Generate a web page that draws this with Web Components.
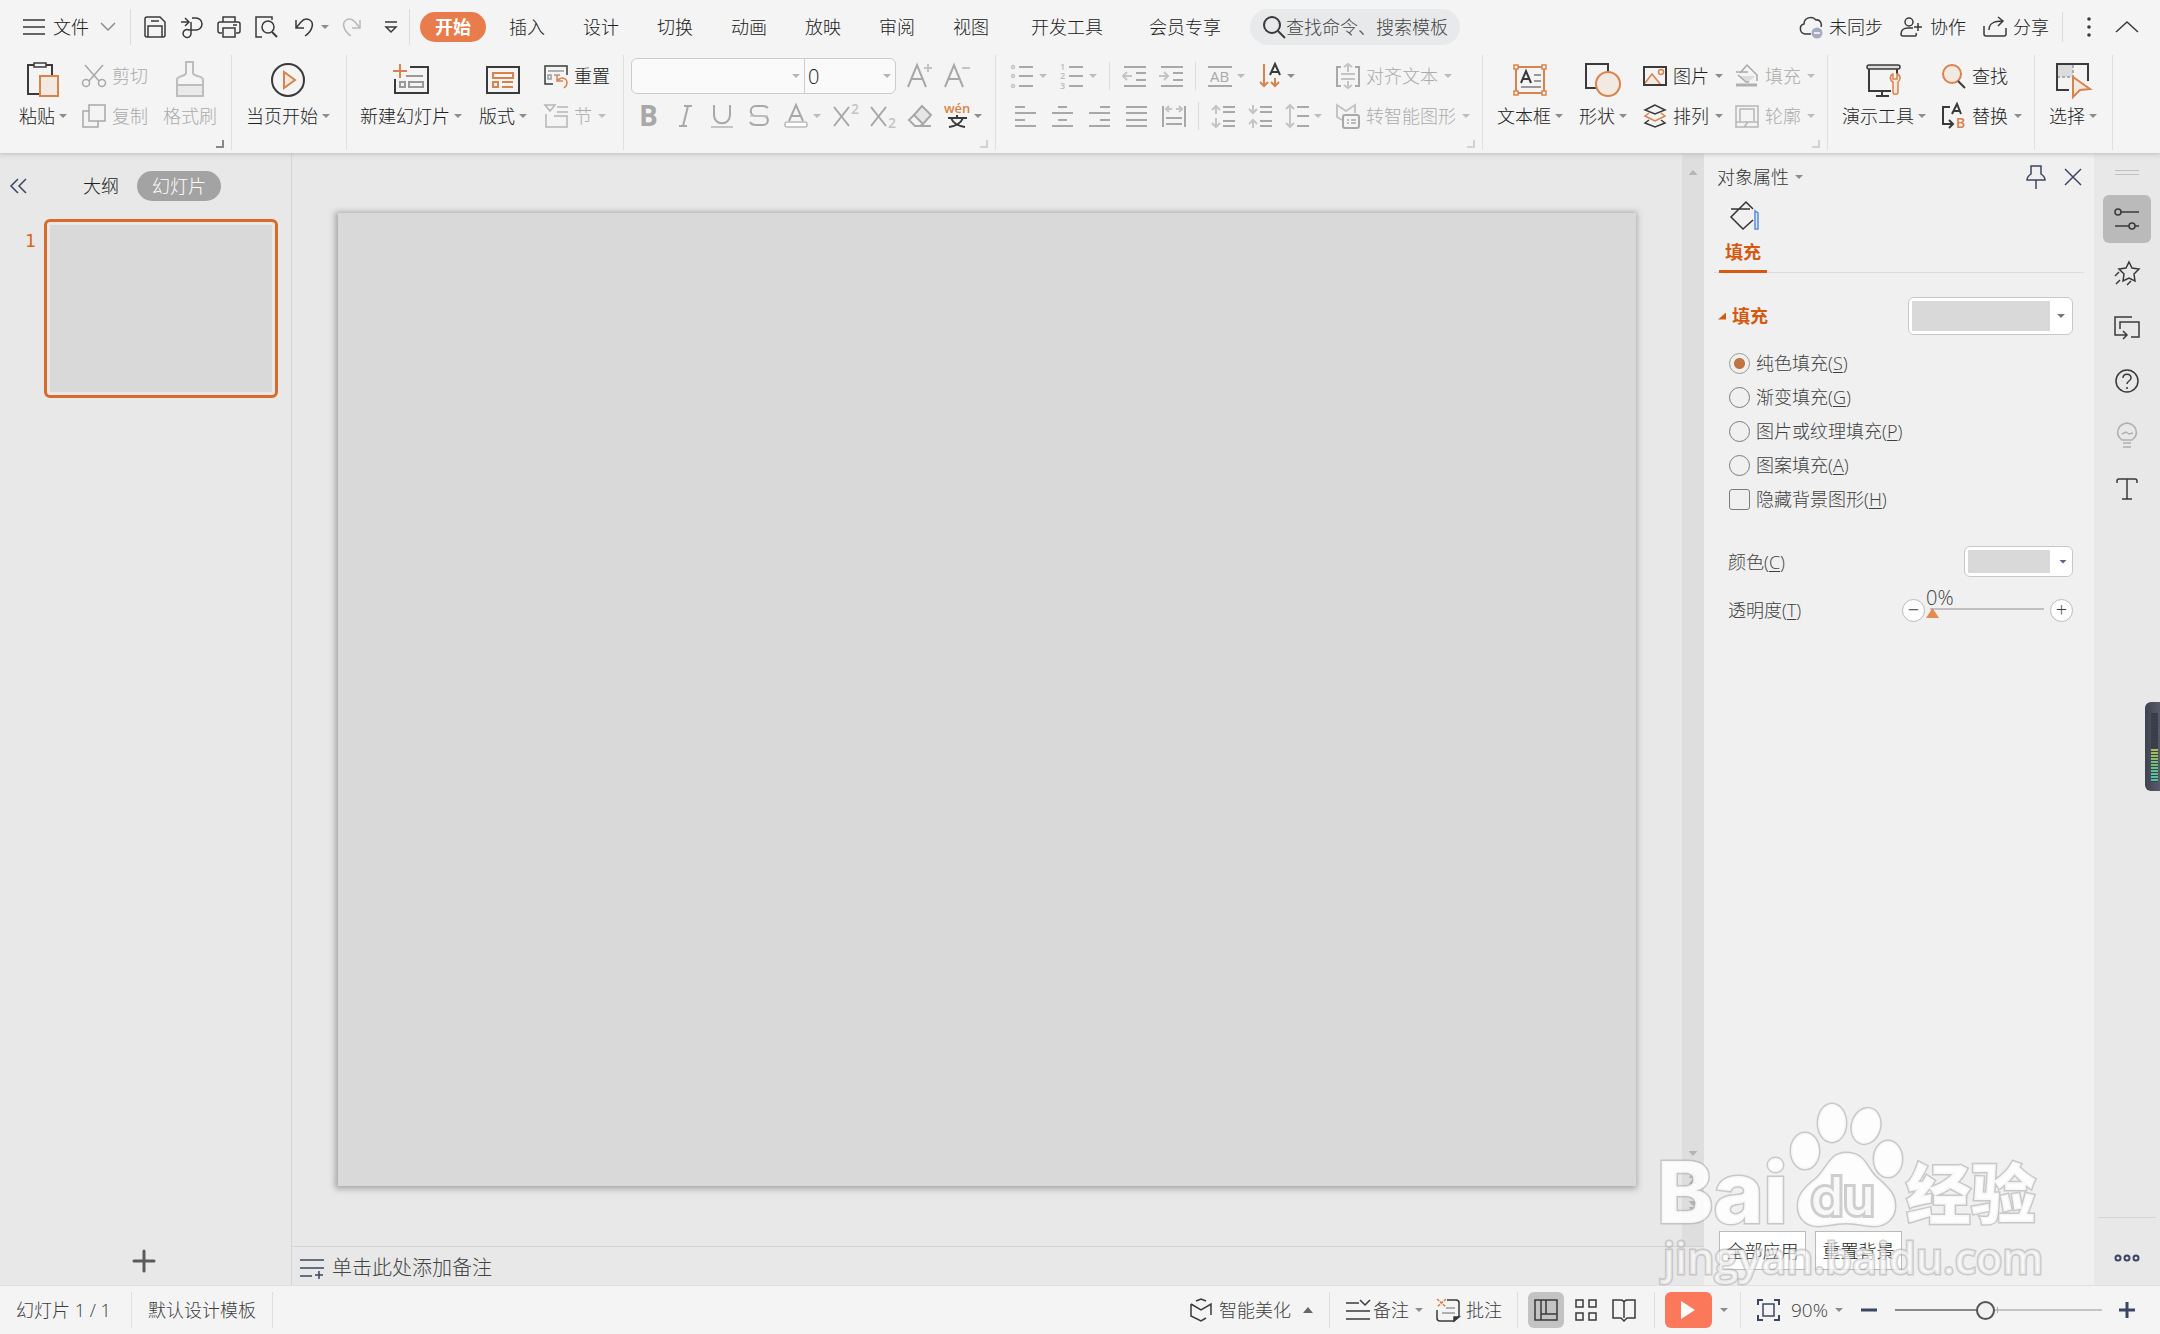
<!DOCTYPE html>
<html lang="zh-CN">
<head>
<meta charset="utf-8">
<title>演示</title>
<style>
html,body{margin:0;height:100%}
body{font:300 18px/24px "Open Sans","Noto Sans CJK SC",sans-serif;color:#202020;background:#e8e8e8;overflow:hidden}
</style>
</head>
<body>
<slide-app></slide-app>
<script>
const RESET = `*{box-sizing:border-box}button,input,select{font:inherit;color:inherit;margin:0;padding:0;border:0;background:none}button{display:flex;align-items:center;flex:none;white-space:nowrap}a{color:inherit;text-decoration:none}`;
const def = (name, html, css) => customElements.define(name, class extends HTMLElement {
  constructor() {
    super();
    this.attachShadow({mode: 'open'}).innerHTML = `<style>${RESET}${css}</style>${typeof html === 'function' ? html(this) : html}`;
  }
});

/* name: [width, height, markup] */
const D = '#3a3a3a', G = '#a8a8a8', L = '#c4c4c4', O = '#d9824a', N = '#3b4663', P = '#f3e9e3';
const T = (x, y, s, c, t, w = 400, f = 'Open Sans') => `<text x="${x}" y="${y}" font-size="${s}" fill="${c}" stroke="none" font-weight="${w}" font-family="'${f}','Noto Sans CJK SC',sans-serif">${t}</text>`;
const lines = (...a) => `<path d="${a.map(([x1, x2, y]) => `M${x1} ${y}H${x2}`).join('')}"/>`;
const ICONS = {
  menu: [22, 18, `<g stroke="#666" stroke-width="2">${lines([0,22,2],[0,22,9],[0,22,16])}</g>`],
  chev: [16, 10, `<path stroke="#8c8c8c" d="M1 1l7 7 7-7"/>`],
  chevup: [24, 14, `<path d="M1 12L12 2l11 10"/>`],
  save: [24, 24, `<path d="M2 4q0-2 2-2h13l5 5v13q0 2-2 2H4q-2 0-2-2zM5 22V11h14v11M8 6h8"/>`],
  exp: [24, 24, `<path d="M1 7h8M5 3l4 4-4 4M12 3h4a6 6 0 0 1 0 12H9a4 4 0 1 0 2 4V7"/>`],
  print: [24, 24, `<path d="M6 7V2h12v5M5 18H3q-2 0-2-2V9q0-2 2-2h18q2 0 2 2v7q0 2-2 2h-2M6 13h12v9H6zM16 10h4"/>`],
  prev: [24, 24, `<path d="M8 22H2V2h16v3"/><circle cx="14" cy="12" r="6"/><path stroke-width="2" d="M18 17l5 5"/>`],
  undo: [20, 20, `<path d="M2 3v8h8M2 11l5-6c5-6 13-2 11 5-1 4-4 7-7 9"/>`],
  redo: [20, 20, `<path stroke="#b9b9b9" d="M18 3v8h-8M18 11l-5-6C8-1 0 3 2 10c1 4 4 7 7 9"/>`],
  qat: [14, 14, `<path d="M1 2h12M2 7l5 5 5-5z"/>`],
  mag: [24, 24, `<g stroke-width="2"><circle cx="10" cy="10" r="8"/><path d="M16 16l7 7"/></g>`],
  cloud: [24, 24, `<path d="M12 19H6C0 18 0 10 5 9c0-6 8-9 12-4 5-1 6 5 5 7"/><circle cx="18" cy="18" r="5.500" fill="#a4acbf" stroke="none"/><path stroke="#fff" d="M15 18h6"/>`],
  user: [24, 22, `<circle cx="9" cy="6" r="4"/><path d="M13 12H8c-5 0-7 3-7 6q0 2 2 2h12q2 0 1-3M14 11h8M18 7v8"/>`],
  share: [24, 22, `<path d="M1 10v8q0 2 2 2h18q2 0 2-2v-6M6 14c0-7 5-9 14-9M15 1l5 4-5 5"/>`],
  dots: [6, 20, `<g fill="${D}" stroke="none"><circle cx="3" cy="2" r="1.800"/><circle cx="3" cy="10" r="1.800"/><circle cx="3" cy="18" r="1.800"/></g>`],
  paste: [36, 36, `<path stroke-width="2" d="M9 4H3v29h11M21 4h6v11"/><path d="M9 2h12v4H9z"/><path fill="${P}" stroke="${O}" stroke-width="2" d="M15 15h18v20H15z"/>`],
  cut: [24, 24, `<g stroke="${G}"><path d="M3 1l14 16M21 1L7 17"/><circle cx="4" cy="19" r="3.500"/><circle cx="20" cy="19" r="3.500"/></g>`],
  copy: [24, 24, `<g stroke="${G}"><path d="M7 7H1v16h15v-6"/><path d="M7 1h16v16H7z"/></g>`],
  brush: [30, 36, `<g stroke="#bdbdbd" stroke-width="2"><path fill="#eaeaea" stroke="none" d="M2 24h26v11H2z"/><path d="M11 1h7v11c0 4 10 2 10 7v16H2V19c0-5 9-3 9-7zM2 24h26"/></g>`],
  play: [34, 36, `<g stroke-width="2"><circle cx="17" cy="19" r="16"/><path stroke="${O}" fill="${P}" d="M13 11v16l11-8z"/></g>`],
  newslide: [36, 36, `<g stroke-width="2"><path d="M17 6h18v26H2V18"/><path stroke="${O}" d="M0 10h14M7 3v14"/><path stroke="#999" d="M13 15h17M7 21h5v5H7zM16 21h14v5H16z"/></g>`],
  layout: [34, 36, `<g stroke-width="2"><path d="M1 6h32v26H1z"/><path stroke="${O}" d="M7 12h20v5H7zM7 21h5v5H7zM16 21h11M16 26h11"/></g>`],
  reset: [24, 24, `<path d="M9 20H1V2h22v9"/><path stroke="#999" d="M4 7h16M4 11h3v4H4zM10 11h6"/><path stroke="${O}" d="M13 11v6h6M13 17c4-5 10-3 10 2 0 3-2 4-3 5"/>`],
  section: [24, 24, `<g stroke="#b5b5b5"><path d="M1 1h10l-5 6zM13 3h11M13 8h11M2 10v13h21V12H10"/></g>`],
  Aup: [26, 24, `<path stroke="${G}" stroke-width="2" d="M0 23L9 1l9 22M4 15h10"/><path stroke="${L}" d="M16 4h8M20 0v8" stroke-width="2"/>`],
  Adn: [26, 24, `<path stroke="${G}" stroke-width="2" d="M0 23L9 1l9 22M4 15h10"/><path stroke="${L}" d="M17 4h8" stroke-width="2"/>`],
  bold: [24, 24, T(3,22,28,G,'B',700)],
  ital: [24, 24, `<path stroke="${G}" stroke-width="2" d="M11 2h8M6 22h8M15 2l-5 20"/>`],
  under: [24, 24, `<path stroke="${G}" stroke-width="2" d="M4 1v10c0 11 16 11 16 0V1"/><path stroke="${L}" stroke-width="2" d="M1 23h22"/>`],
  strike: [24, 24, `<path stroke="${G}" stroke-width="2" d="M21 4c-1-1-3-2-5-2H9c-7 0-7 10 0 10h7c7 0 6 9 0 9H9c-3 0-5-1-6-3"/><path stroke="${L}" d="M3 12h18"/>`],
  fcol: [24, 24, `<path stroke="${G}" stroke-width="2" d="M5 17L12 1l7 16M8 12h9"/><rect x="1" y="18" width="22" height="5" rx="2" stroke="#bbb" fill="#fff"/>`],
  sup: [26, 24, `<path stroke="${G}" stroke-width="2" d="M1 3l15 19M16 3L1 22"/>${T(18,10,14,L,'2',600)}`],
  sub: [26, 24, `<path stroke="${G}" stroke-width="2" d="M1 3l15 19M16 3L1 22"/>${T(18,24,14,L,'2',600)}`],
  erase: [24, 24, `<g stroke="${G}" stroke-width="2"><path fill="#e6e6e6" d="M14 2l9 9-8 9-9-9z"/><path d="M6 11l-5 5 6 6h16M7 22h5l3-2"/></g>`],
  wen: [24, 28, `${T(-1,11,13,O,'wén',600)}<path stroke-width="2" d="M3 16h19M12 13v3M6 16c2 5 7 8 14 9M18 16c-2 5-7 8-14 9"/>`],
  bul: [24, 24, `<g stroke="${G}" stroke-width="2">${lines([9,23,3],[9,23,12],[9,23,22])}</g><g stroke="${L}"><circle cx="3" cy="3" r="1.500"/><circle cx="3" cy="12" r="1.500"/><circle cx="3" cy="22" r="1.500"/></g>`],
  num: [24, 24, `<g stroke="${G}" stroke-width="2">${lines([9,23,3],[9,23,12],[9,23,22])}</g>${T(0,6,9,'#bbb','1',600)}${T(0,15,9,'#bbb','2',600)}${T(0,25,9,'#bbb','3',600)}`],
  ind1: [24, 24, `<g stroke="${G}" stroke-width="2">${lines([2,24,3],[14,24,9],[14,24,16],[2,24,22])}</g><path stroke="${L}" stroke-width="2" d="M10 12H1M5 8l-4 4 4 4"/>`],
  ind2: [24, 24, `<g stroke="${G}" stroke-width="2">${lines([2,24,3],[14,24,9],[14,24,16],[2,24,22])}</g><path stroke="${L}" stroke-width="2" d="M0 12h9M5 8l4 4-4 4"/>`],
  AB: [24, 24, `<g stroke="${G}" stroke-width="2">${lines([0,24,3],[0,24,22])}</g>${T(2,18,15,G,'AB',400)}`],
  sort: [24, 26, `<path stroke="${O}" stroke-width="2" d="M6 1v22M2 19l4 4 4-4M17 15v8M13 19l4 4 4-4"/><path stroke-width="2" d="M12 12l5-11 5 11M14 9h6"/>`],
  valign: [24, 26, `<path stroke="${G}" stroke-width="2" d="M5 4H1v19h4M19 4h4v19h-4"/><path stroke="${L}" stroke-width="2" d="M5 11h14M5 16h14M12 9V1M8 4l4-3 4 3M12 18v7M8 22l4 3 4-3"/>`],
  al: [24, 24, `<g stroke="${G}" stroke-width="2">${lines([1,11,3],[1,22,9],[1,11,16],[1,22,22])}</g>`],
  ac: [24, 24, `<g stroke="${G}" stroke-width="2">${lines([7,16,3],[1,22,9],[7,16,16],[1,22,22])}</g>`],
  ar: [24, 24, `<g stroke="${G}" stroke-width="2">${lines([12,22,3],[1,22,9],[12,22,16],[1,22,22])}</g>`],
  aj: [24, 24, `<g stroke="${G}" stroke-width="2">${lines([1,22,3],[1,22,9],[1,22,16],[1,22,22])}</g>`],
  dist: [24, 24, `<g stroke="${G}" stroke-width="2"><path d="M1 2v21M23 2v21M4 14h16M4 20h16"/></g><path stroke="${L}" stroke-width="2" d="M10 5H4M7 2L4 5l3 3M14 5h6M17 2l3 3-3 3"/>`],
  lsp: [24, 24, `<g stroke="${G}" stroke-width="2">${lines([12,24,3],[12,24,8],[12,24,17],[12,24,22])}</g><path stroke="${L}" stroke-width="2" d="M5 10V2M1 6l4-4 4 4M5 14v9M1 19l4 4 4-4"/>`],
  lsp2: [24, 24, `<g stroke="${G}" stroke-width="2">${lines([12,24,3],[12,24,8],[12,24,17],[12,24,22])}</g><path stroke="${L}" stroke-width="2" d="M5 1v8M1 5l4 4 4-4M5 24v-8M1 20l4-4 4 4"/>`],
  lsp3: [24, 24, `<g stroke="${G}" stroke-width="2">${lines([12,24,3],[12,24,12],[12,24,22])}</g><path stroke="${L}" stroke-width="2" d="M5 2v21M1 5l4-4 4 4M1 19l4 4 4-4"/>`],
  smart: [24, 26, `<path stroke="${L}" stroke-width="2" d="M6 17l-5-3V2l9 6 9-6v8"/><rect x="7" y="12" width="16" height="13" rx="2" stroke="${G}" stroke-width="2"/><path stroke="${G}" d="M11 17h2M15 17h5M11 20h2M15 20h5"/>`],
  tbox: [36, 36, `<path stroke="${O}" stroke-width="2" d="M4 6h28v26H4z"/><g stroke="${O}" fill="#fff"><path d="M2 4h4v4H2zM30 4h4v4h-4zM2 30h4v4H2zM30 30h4v4h-4z"/></g><path stroke-width="2" d="M9 22l5-12 5 12M11 18h6"/><path stroke="#999" stroke-width="2" d="M22 14h7M22 20h7M9 26h20"/>`],
  shape: [36, 36, `<path stroke-width="2" d="M12 27H1V3h22v9"/><circle cx="23" cy="23" r="12" fill="${P}" stroke="${O}" stroke-width="2"/>`],
  pic: [24, 22, `<path fill="${P}" stroke="${O}" d="M2 18l7-9 9 11"/><circle cx="18" cy="7" r="2.500" stroke="${O}"/><path stroke-width="2" d="M1 2h22v18H1z"/>`],
  arr: [24, 24, `<path stroke="${O}" d="M6 9l-4 3 10 5 10-5-4-3"/><path d="M12 1L2 6l10 4 10-4zM6 16l-4 3 10 4 10-4-4-3"/>`],
  fill: [24, 24, `<path fill="#ddd" stroke="none" d="M3 12h18l-8 6z"/><path stroke="${G}" d="M1 8h12M5 9l7-8 10 10v6M3 11l8 7h3"/><path stroke="#b0b0b0" stroke-width="3" d="M1 21h21"/>`],
  outline: [24, 24, `<path stroke="#b5b5b5" d="M1 18V2h22v16M5 17V5h14v12M1 18h22v5H1zM9 23l4-5"/>`],
  tools: [36, 36, `<path stroke-width="2" d="M3 8v22h22M31 8v5M16 30v5M10 35h13"/><rect x="1" y="4" width="33" height="4" rx="2" fill="#ddd"/><path fill="${P}" stroke="${O}" d="M27 21c-4-2-3-7 0-8v5h4v-5c4 1 4 6 1 8v10c0 3-5 3-5 0z"/>`],
  find: [26, 26, `<circle cx="11" cy="11" r="9" fill="${P}" stroke="${O}" stroke-width="2"/><path stroke-width="2" d="M17 18l7 7"/>`],
  repl: [26, 26, `<path stroke-width="2" d="M9 4H2v17h10M8 17l4 4-4 4M11 11l5-10 4 10M13 8h6"/>${T(15,25,14,O,'B',600)}`],
  sel: [36, 36, `<path fill="#dcdcdc" stroke="none" d="M3 4h15v12H3z"/><path stroke="#999" stroke-dasharray="3 2" d="M18 4v12H3"/><path stroke-width="2" d="M14 29H2V3h31v17"/><path fill="${P}" stroke="${O}" stroke-width="2" d="M18 16l17 12-10 1-7 7z"/>`],
  coll: [18, 16, `<g stroke="${N}"><path d="M8 1L1 8l7 7M16 1L9 8l7 7"/></g>`],
  plus: [24, 24, `<path stroke="#5a5a5a" stroke-width="3" stroke-linecap="round" d="M2 12h20M12 2v20"/>`],
  note: [24, 20, `<g stroke="${N}">${lines([0,24,2],[0,24,10],[0,12,18],[15,23,17])}<path d="M19 13v8"/></g>`],
  pin: [22, 24, `<path stroke="${N}" d="M6 1h10v8c3 2 4 4 4 6H2c0-2 1-4 4-6zM11 15v9"/>`],
  x: [18, 18, `<path stroke="${N}" d="M1 1l16 16M17 1L1 17"/>`],
  bucket: [30, 30, `<path stroke="#333" d="M23 8l-7-7L1 16l12 12 10-9M1 8h19"/><path stroke="#5b8bd8" fill="#dce8fb" d="M25 28V10l3 2v16z"/>`],
  rail1: [26, 24, `<circle cx="4" cy="5" r="3"/><path d="M7 5h18M1 19h14M21 19h4"/><circle cx="18" cy="19" r="3"/>`],
  rail2: [26, 26, `<path d="M15 2l3 6 7 1-5 5 1 7-6-3-6 3 1-7-5-5 7-1zM1 16l4-4M2 24l4-4M13 25l4-4"/>`],
  rail3: [26, 24, `<path d="M18 2H1v18h11M6 14V7h19v15h-8M9 16l4 4-4 4"/>`],
  rail4: [24, 24, `<circle cx="12" cy="12" r="11"/><path d="M8 9c0-5 8-5 8 0 0 3-4 3-4 6M12 18v2"/>`],
  rail5: [22, 26, `<g stroke="#b0b0b0"><path d="M6 18c-8-6-4-16 5-17 9 1 13 11 5 17zM6 12l4-2 3 2 4-1M7 21h8M7 25h8"/></g>`],
  rail6: [22, 24, `<path d="M1 6V4q0-2 2-2h16q2 0 2 2v2M11 2v20M6 22h10"/>`],
  more: [26, 8, `<g stroke="${N}" stroke-width="2"><circle cx="4" cy="4" r="2.500"/><circle cx="13" cy="4" r="2.500"/><circle cx="22" cy="4" r="2.500"/></g>`],
  cube: [22, 24, `<path d="M6 3l5-2 5 2M1 6v12l10 5 5-3M1 6l10 6 10-6v11"/>`],
  nts: [24, 22, `${lines([0,13,4],[0,24,12],[0,24,20])}<path d="M14 1l5 5 5-5"/>`],
  cmt: [24, 24, `<path d="M11 2h9q3 0 3 3v13l-5 5H4q-3 0-3-3v-8"/><path stroke="#999" d="M10 10h9M6 15h13"/><path fill="${D}" d="M18 23v-4h5z"/><path stroke="${O}" stroke-dasharray="3 1" d="M1 1l9 8M10 1L1 9"/>`],
  v1: [24, 24, `<path d="M1 2h22v20H1zM7 2v20M7 16h16M12 2v14"/>`],
  v2: [24, 24, `<path d="M2 2h7v7H2zM15 2h7v7h-7zM2 15h7v7H2zM15 15h7v7h-7z"/>`],
  v3: [24, 24, `<path d="M12 4q-1-2-3-2H1v18h8l3 3 3-3h8V2h-8q-2 0-3 2v16"/>`],
  go: [14, 20, `<path fill="#fff" stroke="none" d="M0 1l14 9-14 9z"/>`],
  fit: [24, 22, `<path stroke="${N}" stroke-width="2" d="M1 6V1h5M17 1h5v5M22 16v5h-5M6 21H1v-5"/><path stroke="${N}" d="M6 5h11v12H6z"/>`],
  minus: [16, 16, `<path stroke="${N}" stroke-width="3" d="M0 8h16"/>`],
  zplus: [16, 16, `<path stroke="${N}" stroke-width="3" d="M0 8h16M8 0v16"/>`],
  launch: [8, 8, `<path style="stroke:var(--lc)" stroke-width="2" d="M7 0v7H0"/>`]
};

def('app-icon', el => {
  const [w, h, m] = ICONS[el.getAttribute('name')];
  return `<svg width="${w}" height="${h}" viewBox="0 0 ${w} ${h}" fill="none" stroke="${D}" stroke-width="1.500" aria-hidden="true">${m}</svg>`;
}, `:host{display:flex;align-items:center;justify-content:center;flex:none}svg{display:block;overflow:visible}`);

const CARET = `.caret{width:8px;height:4px;flex:none;background:#8c8c8c;clip-path:polygon(0 0,100% 0,50% 100%)}`;

/* small: icon beside label; big: icon over label; only: icon without a label */
def('tool-button', el => {
  const c = el.hasAttribute('caret') ? '<i class="caret"></i>' : '';
  const ic = `<app-icon name="${el.getAttribute('icon')}"></app-icon>`;
  return el.hasAttribute('big')
    ? `<button>${ic}<span class="l"><slot></slot>${c}</span></button>`
    : `<button ${el.title ? `aria-label="${el.title}"` : ''}>${ic}${el.hasAttribute('only') ? '' : '<slot></slot>'}${c}</button>`;
}, `:host{display:block;flex:none}button{height:36px;gap:6px}app-icon{width:24px}
:host([only]) button{gap:5px}
:host([off]) button{color:#ababab}:host([off]) .caret{background:#bcbcbc}
:host([big]) button{flex-direction:column;height:76px;padding-top:3px;gap:7px}
:host([big]) app-icon{height:36px;width:36px}.l{display:flex;align-items:center;gap:4px}${CARET}`);

def('ribbon-group', el => `<slot></slot>${el.hasAttribute('launch') ? '<button aria-label="更多设置"><app-icon name="launch"></app-icon></button>' : ''}`,
`:host{display:flex;position:relative;flex:none;height:95px;margin-top:1px;border-right:1px solid #dfdfdf;padding-top:3px;gap:16px}
button{position:absolute;right:7px;bottom:2px;--lc:#888}:host([launch=off]) button{--lc:#d2d2d2}`);

def('font-box', `<input aria-label="字体" class="f"><i class="caret"></i><hr><input aria-label="字号" value="0" class="s"><i class="caret"></i>`,
`:host{display:flex;align-items:center;width:265px;height:36px;border:1px solid #ccc;border-radius:6px;background:#fafafa;padding-right:4px}
hr{width:1px;height:34px;border:0;margin:0 0 0 4px;background:#ccc}.f{width:160px;height:30px}.s{flex:1;min-width:0;height:30px;padding-left:3px;font-size:20px}${CARET}.caret{background:#b5b5b5}`);

def('top-bar', `
<button class="file"><app-icon name="menu"></app-icon>文件<app-icon name="chev"></app-icon></button><hr>
<nav class="qat"><button aria-label="保存"><app-icon name="save"></app-icon></button><button aria-label="输出"><app-icon name="exp"></app-icon></button><button aria-label="打印"><app-icon name="print"></app-icon></button><button aria-label="打印预览"><app-icon name="prev"></app-icon></button><button class="u" aria-label="撤销"><app-icon name="undo"></app-icon><i class="caret"></i></button><button aria-label="恢复"><app-icon name="redo"></app-icon></button><button class="q" aria-label="自定义"><app-icon name="qat"></app-icon></button></nav><hr>
<nav class="tabs">${['开始','插入','设计','切换','动画','放映','审阅','视图','开发工具','会员专享'].map((t, i) => `<a href="#" class="${t.length > 2 ? 'w' : ''} ${i ? '' : 'on'}"><span>${t}</span></a>`).join('')}</nav>
<label><app-icon name="mag"></app-icon><input placeholder="查找命令、搜索模板" aria-label="搜索"></label>
<div class="right"><button><app-icon name="cloud"></app-icon>未同步</button><button><app-icon name="user"></app-icon>协作</button><button><app-icon name="share"></app-icon>分享</button><hr><button class="d" aria-label="更多"><app-icon name="dots"></app-icon></button><button aria-label="收起功能区"><app-icon name="chevup"></app-icon></button></div>`,
`:host{display:flex;align-items:center;height:54px;padding:0 21px 0 23px}
hr{width:1px;height:36px;border:0;margin:0;background:#dcdcdc;flex:none}
.file{gap:8px;margin-right:14px}.file app-icon:last-child{margin-left:3px}
.qat{display:flex;align-items:center;gap:13px;padding:0 11px 0 12px}.u{gap:7px;margin-left:3px}.qat .q{margin:0 0 0 9px}
.tabs{display:flex;padding-left:6px}.tabs a{width:74px;display:flex;justify-content:center;align-items:center}.tabs .w{width:118px}
.on span{background:#e87c4c;color:#fff;font-weight:700;border-radius:15px;padding:3px 15px}
label{display:flex;align-items:center;background:#e7e9ea;border-radius:18px;height:36px;width:210px;padding-left:12px;margin-left:6px}
input{flex:1;min-width:0;height:30px}input::placeholder{color:#444;opacity:1}
.right{display:flex;align-items:center;margin-left:auto;gap:17px}.right button{gap:6px}.right hr{height:30px;margin-right:6px;margin-left:-4px}.right .d{margin:0 6px 0 0}${CARET}`);

const tb = (icon, label, o = '') => `<tool-button icon="${icon}" ${o}>${label}</tool-button>`;
const only = (icon, title, o = '') => `<tool-button only icon="${icon}" title="${title}" ${o}></tool-button>`;
def('ribbon-bar', `
<ribbon-group launch class="g1">${tb('paste','粘贴','big caret')}<div class="c">${tb('cut','剪切','off')}${tb('copy','复制','off')}</div>${tb('brush','格式刷','big off')}</ribbon-group>
<ribbon-group class="g2">${tb('play','当页开始','big caret')}</ribbon-group>
<ribbon-group class="g3">${tb('newslide','新建幻灯片','big caret')}${tb('layout','版式','big caret')}<div class="c">${tb('reset','重置')}${tb('section','节','off caret')}</div></ribbon-group>
<ribbon-group launch="off" class="g4"><div class="c"><div class="r"><font-box></font-box>${only('Aup','增大字号','off')}${only('Adn','减小字号','off')}</div>
<div class="r in">${only('bold','加粗','off')}${only('ital','倾斜','off')}${only('under','下划线','off')}${only('strike','删除线','off')}${only('fcol','字体颜色','off caret')}${only('sup','上标','off')}${only('sub','下标','off')}${only('erase','清除格式','off')}${only('wen','拼音','caret')}</div></div></ribbon-group>
<ribbon-group launch="off" class="g5"><div class="c"><div class="r">${only('bul','项目符号','off caret')}${only('num','编号','off caret')}<hr>${only('ind1','减少缩进','off')}${only('ind2','增加缩进','off')}<hr>${only('AB','文字效果','off caret')}${only('sort','文字方向','caret')}</div>
<div class="r in">${only('al','左对齐','off')}${only('ac','居中','off')}${only('ar','右对齐','off')}${only('aj','两端对齐','off')}${only('dist','分散对齐','off')}<hr>${only('lsp','增大段距','off')}${only('lsp2','减小段距','off')}${only('lsp3','行距','off caret')}</div></div>
<div class="c">${tb('valign','对齐文本','off caret')}${tb('smart','转智能图形','off caret')}</div></ribbon-group>
<ribbon-group launch="off" class="g6">${tb('tbox','文本框','big caret')}${tb('shape','形状','big caret')}<div class="cc"><div class="c">${tb('pic','图片','caret')}${tb('arr','排列','caret')}</div><div class="c">${tb('fill','填充','off caret')}${tb('outline','轮廓','off caret')}</div></div></ribbon-group>
<ribbon-group class="g7">${tb('tools','演示工具','big caret')}<div class="c">${tb('find','查找')}${tb('repl','替换','caret')}</div></ribbon-group>
<ribbon-group class="g8">${tb('sel','选择','big caret')}</ribbon-group>`,
`:host{display:flex;height:99px}
.c{display:flex;flex-direction:column;gap:4px;flex:none}.cc{display:flex;gap:12px}.r{display:flex;align-items:center;gap:13px}hr{width:1px;height:28px;border:0;background:#dcdcdc;margin:0 -1px}
.g1{padding-left:19px;padding-right:14px;gap:15px}.g2{padding-left:14px;padding-right:16px}.g3{padding-left:13px;padding-right:13px;gap:17px}
.g4{padding-left:7px;padding-right:13px}.g4 .in{padding-left:5px}.g5{padding-left:14px;padding-right:12px;gap:14px}.g5 .in{padding-left:4px}
.g6,.g7,.g8{padding-left:14px;padding-right:12px}.g8{padding-right:15px}`);

def('slide-panel', `<header><button aria-label="收起"><app-icon name="coll"></app-icon></button><button class="o">大纲</button><button class="on">幻灯片</button></header>
<ol><li><span>1</span><a href="#" aria-label="幻灯片 1"><i></i></a></li></ol><button class="add" aria-label="新建幻灯片"><app-icon name="plus"></app-icon></button>`,
`:host{display:flex;flex-direction:column;width:292px;border-right:1px solid #d4d4d4;padding:18px 13px 12px 10px}
header{display:flex;align-items:center;height:30px}.o{margin-left:55px}.on{margin-left:18px;height:30px;background:#a3a3a3;color:#fff;border-radius:15px;padding:0 15px}
ol{list-style:none;margin:18px 0 0;padding:0}li{display:flex;justify-content:flex-end;gap:8px}li span{color:#d8641a;font:400 17px/24px "DejaVu Sans",sans-serif;padding-top:10px}
a{width:234px;height:179px;border:3px solid #d76b2b;border-radius:6px;padding:3px;display:flex}i{flex:1;background:#d9d9d9}
.add{margin:auto auto 0 122px}`);

def('slide-stage', `<div class="row"><main><section aria-label="幻灯片"></section></main><div class="sb"><i class="up"></i><i class="gap"></i><i></i><span><i class="up"></i><i class="up"></i></span><span><i></i><i></i></span></div></div>
<footer><app-icon name="note"></app-icon>单击此处添加备注</footer>`,
`:host{display:flex;flex-direction:column;flex:1;min-width:0}
.row{display:flex;flex:1;min-height:0}main{flex:1;display:flex;align-items:center;justify-content:center;padding:0 46px}
section{width:100%;aspect-ratio:4/3;background:#d9d9d9;box-shadow:-1px 1px 6px 2px #a8a8a8}
.sb{width:22px;background:#dedede;display:flex;flex-direction:column;align-items:center;padding:17px 0 34px}
.sb i{width:9px;height:5px;background:#b4b4b4;clip-path:polygon(0 0,100% 0,50% 100%);flex:none}.sb .up{clip-path:polygon(0 100%,100% 100%,50% 0)}.sb .gap{flex:1;clip-path:none;background:none}
.sb span{display:flex;flex-direction:column;gap:1px;margin-top:17px}
footer{display:flex;align-items:center;gap:8px;height:39px;border-top:1px solid #d2d2d2;padding:3px 8px 0;font-size:20px;color:#444}`);

const opt = (t, k, type, on) => `<label><input type="${type}" name="fill" ${on ? 'checked' : ''}><span>${t}(<u>${k}</u>)</span></label>`;
def('property-panel', `<header><button class="t">对象属性<i class="caret"></i></button><button aria-label="固定"><app-icon name="pin"></app-icon></button><button aria-label="关闭"><app-icon name="x"></app-icon></button></header>
<nav><button><app-icon name="bucket"></app-icon><b>填充</b></button></nav>
<div class="sec"><b id="ft"><i class="tri"></i>填充</b><div class="box w"><select aria-labelledby="ft"><option></option></select><i class="caret"></i></div></div>
<fieldset>${opt('纯色填充','S','radio',1)}${opt('渐变填充','G','radio')}${opt('图片或纹理填充','P','radio')}${opt('图案填充','A','radio')}${opt('隐藏背景图形','H','checkbox')}</fieldset>
<div class="f"><label for="col">颜色(<u>C</u>)</label><div class="box"><select id="col"><option></option></select><i class="caret"></i></div></div>
<div class="f s"><label for="tr">透明度(<u>T</u>)</label><button class="rd" aria-label="减小">−</button><div class="sl"><output>0%</output><input id="tr" type="range" value="0"></div><button class="rd" aria-label="增大">+</button></div>
<footer><button>全部应用</button><button>重置背景</button></footer>`,
`:host{display:flex;flex-direction:column;width:390px;background:#f0f0f0;color:#404040;padding:11px 21px 15px 15px}
header{display:flex;align-items:center;height:26px;color:#333;margin:0 -9px 0 -2px}.t{gap:6px;margin-right:auto}header button+button{margin-left:17px}${CARET}
nav{display:flex;border-bottom:1px solid #dcdcdc;margin:10px -11px 0 -5px;padding-left:5px}nav button{flex-direction:column;padding:1px 6px 5px;gap:9px;height:73px;border-bottom:3px solid #d45a12;margin-bottom:-1px}
nav b,.sec b{color:#d45a12;font-weight:700}nav app-icon{height:30px;margin-left:3px}
.sec{display:flex;justify-content:space-between;align-items:center;margin-top:24px}.sec b{display:flex;align-items:center;gap:6px;margin-left:-1px}.tri{width:8px;height:7px;background:#d45a12;clip-path:polygon(100% 0,100% 100%,0 100%)}
.box{position:relative;width:109px;height:31px;display:flex;align-items:center}.box select{appearance:none;width:100%;height:100%;border:1px solid #c8c8c8;border-radius:6px;padding:3px;background:linear-gradient(#d9d9d9,#d9d9d9) 3px 3px/calc(100% - 25px) calc(100% - 6px) no-repeat #fff}
.box .caret{position:absolute;right:6px;background:#5c6488}.w{width:165px;height:38px}.w .caret{right:8px;background:#777}
fieldset{border:0;margin:11px 0 0 10px;padding:0}fieldset label{display:flex;align-items:center;gap:6px;height:34px}u{text-underline-offset:2px;text-decoration-thickness:1px}
input[type=radio],input[type=checkbox]{appearance:none;width:21px;height:21px;border:1px solid #7c7c7c;flex:none;border-radius:3px}input[type=radio]{border-radius:50%}input:checked{border-color:#999;background:radial-gradient(circle,#bf7442 5px,transparent 6px)}
.f{display:flex;align-items:center;margin:30px 0 0 9px}.f>label{margin-right:auto}.s{margin-top:17px}
.rd{width:23px;height:23px;border:1px solid #bbb;border-radius:50%;background:#fff;justify-content:center;font-size:20px;line-height:20px}
.sl{position:relative;width:118px;margin:0 6px 0 1px;height:32px;display:flex;align-items:flex-end}output{position:absolute;left:0;top:-8px;font-size:20px}
input[type=range]{appearance:none;width:100%;height:18px;display:block;background:linear-gradient(#c0bfc6,#c0bfc6) 4px 0/100% 2px no-repeat}
input[type=range]::-webkit-slider-thumb{appearance:none;width:13px;height:10px;background:#e58a52;clip-path:polygon(50% 0,100% 100%,0 100%);margin-top:-8px}
footer{display:flex;gap:9px;margin-top:auto}footer button{border:1px solid #bbb;background:#fff;width:87px;height:39px;justify-content:center;color:#222}`);

def('side-rail', `<i class="h"></i>${['属性','动画','切换','帮助','提示','文字'].map((t, i) => `<button aria-label="${t}" class="${i ? '' : 'on'}"><app-icon name="rail${i + 1}"></app-icon></button>`).join('')}<hr><button aria-label="更多" class="m"><app-icon name="more"></app-icon></button>`,
`:host{display:flex;flex-direction:column;align-items:center;width:66px;gap:6px;padding-top:17px;padding-bottom:3px}
.h{width:24px;height:5px;border:1px solid #c0c0c0;border-width:1px 0;margin-bottom:14px}button{width:48px;height:48px;justify-content:center;border-radius:6px}.on{background:#bababa}
hr{width:58px;height:1px;border:0;background:#d4d4d4;margin:auto 0 10px}`);

def('status-bar', `<span class="pg">幻灯片 1 / 1</span><hr><span>默认设计模板</span><hr>
<div><button class="a"><app-icon name="cube"></app-icon>智能美化<i class="caret up"></i></button><hr>
<button class="n"><app-icon name="nts"></app-icon>备注<i class="caret"></i></button><button class="cm"><app-icon name="cmt"></app-icon>批注</button><hr>
<button class="v on" aria-label="普通视图"><app-icon name="v1"></app-icon></button><button class="v" aria-label="浏览"><app-icon name="v2"></app-icon></button><button class="v" aria-label="阅读"><app-icon name="v3"></app-icon></button><hr class="h2">
<button class="go" aria-label="放映"><app-icon name="go"></app-icon></button><button class="k" aria-label="放映选项"><i class="caret"></i></button><hr>
<button class="ft" aria-label="适应窗口"><app-icon name="fit"></app-icon></button><button class="z">90%<i class="caret"></i></button><button aria-label="缩小"><app-icon name="minus"></app-icon></button><input type="range" value="43" aria-label="缩放"><button aria-label="放大"><app-icon name="zplus"></app-icon></button></div>`,
`:host{display:flex;align-items:center;height:49px;background:#f4f4f4;border-top:1px solid #e0e0e0;padding:0 25px 0 16px;color:#3c3c3c}
hr{width:1px;height:36px;border:0;margin:0 16px;background:#dedede;flex:none}div{display:flex;align-items:center;margin-left:auto}.pg{min-width:99px}
${CARET}.up{width:10px;height:6px;background:#666;clip-path:polygon(50% 0,100% 100%,0 100%);margin-left:5px}
.a{gap:7px}.n{gap:3px}.n .caret{margin-left:3px}.cm{gap:6px;margin-left:13px}.cm+hr{margin:0 10px 0 15px}
.v{width:36px;height:36px;justify-content:center;border-radius:6px}.on{background:#c3c3c3}.v+.v{margin-left:4px}.v+.v+.v{margin-left:2px}.h2{margin:0 10px 0 12px}
.go{width:47px;height:36px;border-radius:6px;background:#fb795a;justify-content:center}.k{margin-left:8px}.k+hr{margin-left:12px}.ft{margin-right:10px}.z{gap:7px;margin-right:18px;font-size:19px}
input{appearance:none;width:207px;height:24px;margin:0 17px 0 18px;background:linear-gradient(#888,#888) 0 11px/82px 2px no-repeat,linear-gradient(#aaa,#aaa) 102px 9px/1px 6px no-repeat,linear-gradient(#c4c4c4,#c4c4c4) 0 11px/100% 2px no-repeat}
input::-webkit-slider-thumb{appearance:none;width:19px;height:19px;border:2px solid #555;border-radius:50%;background:#f1f1f1}`);

def('water-mark', `<svg width="400" height="190" viewBox="0 0 400 190" role="img" aria-label="Baidu 经验">
<g fill="#fff" fill-opacity=".85" stroke="#a8a8a8" stroke-opacity=".55" stroke-width="3" paint-order="stroke">
<ellipse cx="155" cy="61" rx="14" ry="18"/><ellipse cx="182" cy="33" rx="14" ry="19"/><ellipse cx="216" cy="36" rx="14" ry="18" transform="rotate(15 216 36)"/><ellipse cx="238" cy="69" rx="14" ry="18"/>
<path d="M196 63c20 0 20 16 32 26 14 12 17 18 17 27 0 12-9 20-21 20-10 0-16-3-28-3s-18 3-28 3c-12 0-20-8-20-20 0-10 5-17 18-27 12-11 14-26 30-26z"/>
<text x="7" y="133" font-family="Inter,sans-serif" font-weight="800" font-size="85">Bai</text><text x="161" y="125" font-family="Inter,sans-serif" font-weight="500" font-size="52" stroke-width="6">du</text>
<text x="256" y="128" font-family="'Noto Sans CJK SC',sans-serif" font-weight="900" font-size="65">经验</text>
<text x="13" y="184" font-family="'Open Sans',sans-serif" font-weight="600" font-size="43" fill-opacity=".65">jingyan.baidu.com</text></g></svg>`,
`:host{position:absolute;right:110px;bottom:54px;pointer-events:none}svg{display:block;overflow:visible}`);

def('level-meter', `<i></i>`, `:host{position:absolute;right:0;top:702px;width:15px;height:89px;background:linear-gradient(90deg,#3f4350,#575b6b);border-radius:6px 0 0 6px;padding:11px 2px 9px 6px;display:flex}
i{flex:1;background:repeating-linear-gradient(transparent 0 2px,#3d414e 2px 3px),linear-gradient(#3a3d48 52%,#b3bb55 52%,#6fbf7c 75%,#4ac4b0)}`);

def('slide-app', `<div class="top"><top-bar></top-bar><ribbon-bar></ribbon-bar></div><div class="mid"><slide-panel></slide-panel><slide-stage></slide-stage><property-panel></property-panel><side-rail></side-rail></div><status-bar></status-bar><water-mark></water-mark><level-meter></level-meter>`,
`:host{display:flex;flex-direction:column;height:100vh;position:relative;overflow:hidden}.top{background:#f4f4f4;box-shadow:0 1px 5px #bbb;position:relative;flex:none}.mid{display:flex;flex:1;min-height:0}status-bar{flex:none}`);
</script>
</body>
</html>
